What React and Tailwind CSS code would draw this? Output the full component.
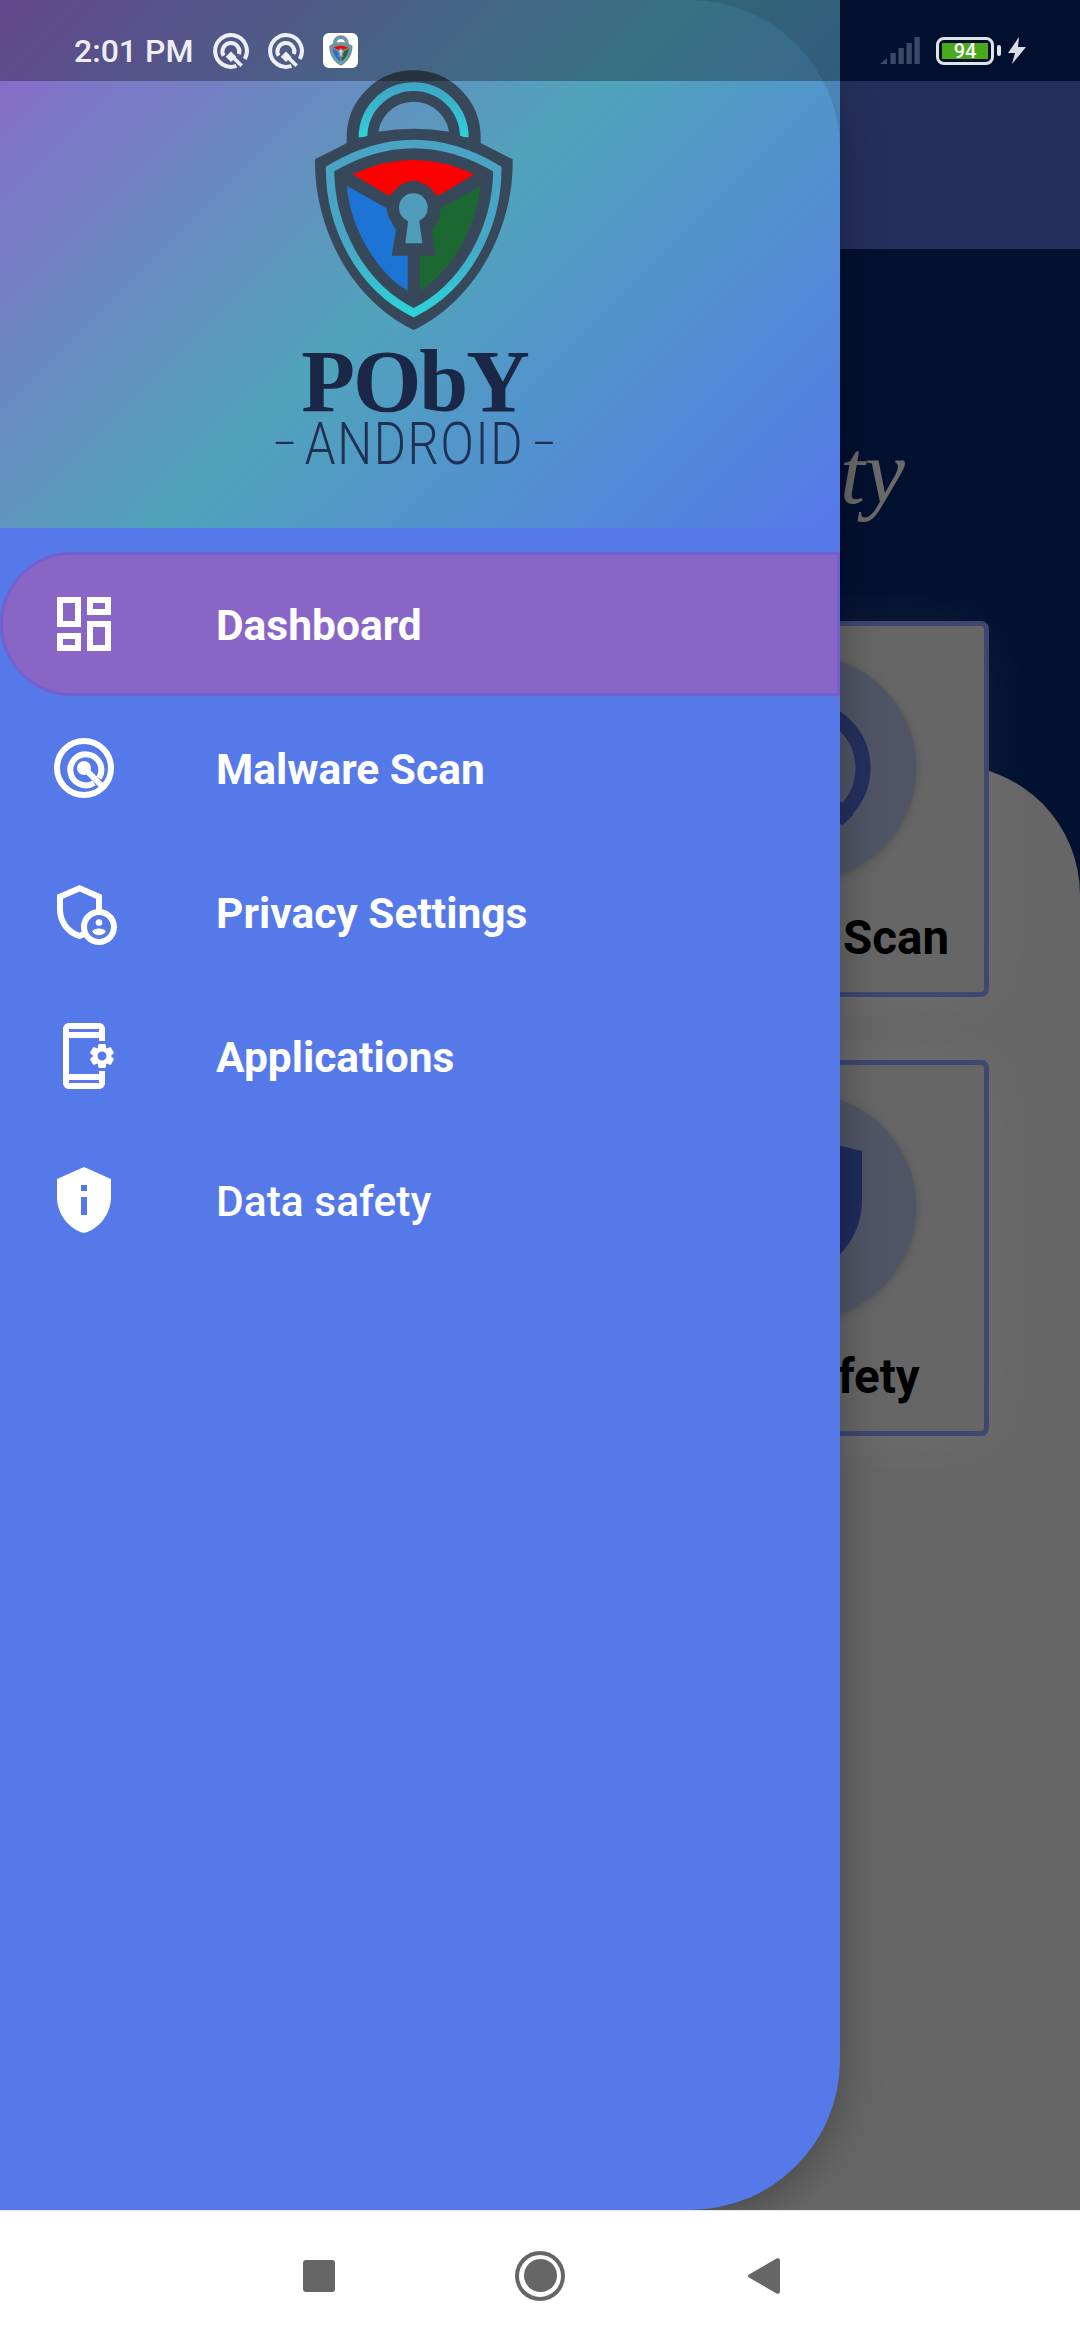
import React from "react";
import { MdOutlineDashboard, MdOutlineAdminPanelSettings, MdOutlineAppSettingsAlt } from "react-icons/md";

function LockLogo({ className, dark = "#37485a", hole = "#509cbb", uid = "a" }) {
  return (
    <svg viewBox="0 0 750 840" className={className}>
      <defs>
        <linearGradient id={`ring-${uid}`} x1="0" y1="0" x2="0" y2="1">
          <stop offset="0" stopColor="#4aa3c4" />
          <stop offset="0.6" stopColor="#46a6c6" />
          <stop offset="1" stopColor="#2cd3d9" />
        </linearGradient>
        <linearGradient id={`sh-${uid}`} x1="0" y1="0" x2="0" y2="1">
          <stop offset="0" stopColor="#3fa6c6" />
          <stop offset="1" stopColor="#30d0da" />
        </linearGradient>
      </defs>
      <path d="M217 262V232A154 154 0 0 1 525 232V262" fill="none" stroke={dark} strokeWidth="94" />
      <path d="M219 232A152 152 0 0 1 523 232" fill="none" stroke={`url(#sh-${uid})`} strokeWidth="26" />
      <path d="M75 298L170 250L265 215Q371 198 478 215L573 250L668 298C672 500 560 720 371 810C182 720 71 500 75 298Z" fill={dark} />
      <path d="M120 327Q371 177 622 327C622 500 530 680 371 758C212 680 120 500 120 327Z" fill="none" stroke={`url(#ring-${uid})`} strokeWidth="25" />
      <path d="M188 343Q371 257 553 343L443 408Q371 316 298 408Z" fill="#ff0000" />
      <path d="M170 377L290 445L295 470L318 510L305 587H353V692C260 640 180 500 170 377Z" fill="#1c74d4" />
      <path d="M572 377L452 445L448 475L425 510L437 587H390V692C480 640 560 500 572 377Z" fill="#1c6833" />
      <circle cx="370" cy="443" r="43" fill={hole} />
      <path d="M355 478H387L397 550H346Z" fill={hole} />
    </svg>
  );
}

function QIcon() {
  return (
    <svg viewBox="0 0 34 34" className="w-[36px] h-[36px]" fill="none" stroke="#eeeef5">
      <path d="M22.1 31.1A15 15 0 1 1 30 24.5" strokeWidth="3.8" />
      <path d="M10 21.5A8 8 0 1 1 24.5 20" strokeWidth="3.8" />
      <path d="M12 22.5L17 17.5L22 22.5L17 27.5Z" fill="#eeeef5" stroke="none" />
      <path d="M19 23L27 31" strokeWidth="3.4" />
    </svg>
  );
}

function ScanIcon() {
  return (
    <svg viewBox="0 0 72 72" className="w-[72px] h-[72px]" fill="none" stroke="#fff" strokeWidth="6">
      <circle cx="36" cy="36" r="27" />
      <path d="M51 46A15.5 15.5 0 1 0 46 51" />
      <circle cx="36" cy="36" r="7" fill="#fff" stroke="none" />
      <path d="M36 36L57 57" />
    </svg>
  );
}

function ShieldInfoIcon() {
  return (
    <svg viewBox="0 0 24 24" className="w-[72px] h-[72px]" fill="#fff">
      <path d="M12 1 3 5v6c0 5.55 3.84 10.74 9 12 5.16-1.26 9-6.45 9-12V5l-9-4zm1 16h-2v-6h2v6zm0-8h-2V7h2v2z" fillRule="evenodd" />
    </svg>
  );
}

const items = [
  { label: "Dashboard", icon: <MdOutlineDashboard className="w-[72px] h-[72px]" />, weight: "font-bold", active: true },
  { label: "Malware Scan", icon: <ScanIcon />, weight: "font-bold" },
  { label: "Privacy Settings", icon: <MdOutlineAdminPanelSettings className="w-[72px] h-[72px]" />, weight: "font-bold" },
  { label: "Applications", icon: <MdOutlineAppSettingsAlt className="w-[72px] h-[72px]" />, weight: "font-bold" },
  { label: "Data safety", icon: <ShieldInfoIcon />, weight: "font-medium" },
];

function MenuRow({ label, icon, weight, active }) {
  return (
    <div
      className={
        active
          ? "h-[144px] flex items-center pl-[45px] bg-[#8966c6] border-[3px] border-[#7260d2] rounded-l-[72px] text-white"
          : "h-[144px] flex items-center pl-[48px] text-white"
      }
    >
      <div className="w-[72px] h-[72px] shrink-0 flex items-center justify-center">{icon}</div>
      <span className={`ml-[96px] mt-[4px] text-[42.5px] leading-none ${weight}`}>{label}</span>
    </div>
  );
}

function Card({ label, children }) {
  return (
    <div className="w-[372px] h-[376px] rounded-lg border-[5px] border-[#3f4670] bg-[#666666] flex flex-col items-center pt-[29px] shadow-[0_0_60px_rgba(255,255,255,0.06)]">
      <div className="w-[225px] h-[225px] rounded-full bg-[#505566] shadow-[0_2px_8px_rgba(0,0,0,0.2)] flex items-center justify-center">
        {children}
      </div>
      <div className="mt-[31px] mr-[8px] text-[47.5px] leading-[54px] font-bold text-black whitespace-nowrap">{label}</div>
    </div>
  );
}

export default function App() {
  return (
    <div className="relative w-[1080px] h-[2340px] overflow-hidden flex flex-col bg-white font-['Roboto',sans-serif]">
      <main className="relative h-[2210px] shrink-0 bg-[#031130] overflow-hidden">
        <div className="absolute left-0 right-0 top-[765px] bottom-0 bg-[#666666] rounded-tr-[130px]" />
        <div className="relative flex flex-col">
          <div className="h-[81px] bg-[#041845]" />
          <div className="h-[168px] bg-[#242f5d]" />
          <div className="mt-[179px] pr-[175px] text-right text-[90px] leading-[90px] italic text-[#6a6a6a] font-['Liberation_Serif',serif]">
            Data Safety
          </div>
          <div className="mt-[103px] ml-[617px] flex flex-col gap-[63px]">
            <Card label="Malware Scan">
              <svg viewBox="0 0 140 140" className="w-[140px] h-[140px]" fill="none">
                <circle cx="70" cy="70" r="60" stroke="#24305f" strokeWidth="15" />
                <path d="M80 86L115 122" stroke="#24305f" strokeWidth="15" />
              </svg>
            </Card>
            <Card label="Data safety">
              <svg viewBox="0 0 118 140" className="w-[118px] h-[140px]">
                <path d="M59 0L118 14V64C118 100 92 130 59 140C26 130 0 100 0 64V14Z" fill="#1f2c5c" />
              </svg>
            </Card>
          </div>
        </div>

        <aside className="absolute left-0 top-0 w-[840px] h-[2210px] bg-[#5579e9] rounded-r-[150px] shadow-[0_8px_44px_rgba(0,0,0,0.3)]">
          <header className="relative h-[528px] overflow-hidden bg-[linear-gradient(135deg,#8e66ca_0%,#50a3bb_50%,#5579e9_100%)]">
            <div className="absolute inset-0 rounded-tr-[150px] shadow-[0_0_0_300px_rgba(0,0,0,0.1)]" />
            <div className="relative pt-[60px] pr-[11px] flex flex-col items-center">
              <LockLogo className="w-[250px] h-[280px]" uid="main" />
              <div className="mt-[7px] text-[88px] leading-[70px] font-bold tracking-[-2px] text-[#1a2747] font-['Liberation_Serif',serif]">
                PObY
              </div>
              <div className="mt-[3px] flex items-center gap-[10px] text-[60px] leading-[48px] font-light text-[#1f3052] scale-x-[0.82] whitespace-nowrap">
                <span className="text-[44px]">–</span>
                <span className="tracking-[2px]">ANDROID</span>
                <span className="text-[44px]">–</span>
              </div>
            </div>
          </header>
          <nav className="pt-[24px] flex flex-col">
            {items.map((it) => (
              <MenuRow key={it.label} {...it} />
            ))}
          </nav>
        </aside>

        <div className="absolute left-0 right-0 top-0 h-[81px] pt-[20px] bg-black/30 flex items-center justify-between pl-[74px] pr-[54px]">
          <div className="flex items-center">
            <span className="text-[32px] leading-none font-medium text-[#eeeef5]">2:01 PM</span>
            <div className="ml-[20px] flex items-center gap-[19px]">
              <QIcon />
              <QIcon />
            </div>
            <div className="ml-[19px] w-[35px] h-[35px] rounded-md bg-white flex items-center justify-center">
              <LockLogo className="w-[30px] h-[33px]" dark="#7f8a96" hole="#c9d6e2" uid="mini" />
            </div>
          </div>
          <div className="flex items-center">
            <svg viewBox="0 0 40 27" className="w-[40px] h-[27px]" fill="#3d4a66">
              <path d="M0 27L7 21V27Z" />
              <rect x="10.5" y="16" width="5.3" height="11" />
              <rect x="18.5" y="11" width="5.3" height="16" />
              <rect x="26.5" y="6" width="5.3" height="21" />
              <rect x="34.5" y="0" width="5.3" height="27" />
            </svg>
            <div className="ml-[16px] w-[58px] h-[28px] rounded-lg border-[3.5px] border-[#dfe3ea] p-[3px] flex">
              <div className="flex-1 bg-[#49a81c] flex items-center justify-center text-white text-[20px] leading-none font-medium">94</div>
            </div>
            <div className="ml-[3px] w-[4px] h-[11px] rounded-sm bg-[#dfe3ea]" />
            <svg viewBox="0 0 18 27" className="ml-[7px] w-[18px] h-[27px]" fill="#d8dce5">
              <path d="M11 0L0 16H7L4 27L18 10H10Z" />
            </svg>
          </div>
        </div>
      </main>

      <footer className="h-[130px] bg-white border-t border-[#e8e8e8] flex items-center pl-[303px]">
        <div className="w-[32px] h-[32px] rounded-[3px] bg-[#666666]" />
        <div className="ml-[180px] w-[50px] h-[50px] rounded-full border-[4px] border-[#666666] flex items-center justify-center">
          <div className="w-[33px] h-[33px] rounded-full bg-[#666666]" />
        </div>
        <svg viewBox="0 0 32 36" className="ml-[183px] w-[32px] h-[36px]" fill="#666666">
          <path d="M28.5 .6C30 -.3 32 .6 32 2.5V33.5C32 35.4 30 36.3 28.5 35.4L1 19.6C-.3 18.9 -.3 17.1 1 16.4Z" />
        </svg>
      </footer>
    </div>
  );
}
